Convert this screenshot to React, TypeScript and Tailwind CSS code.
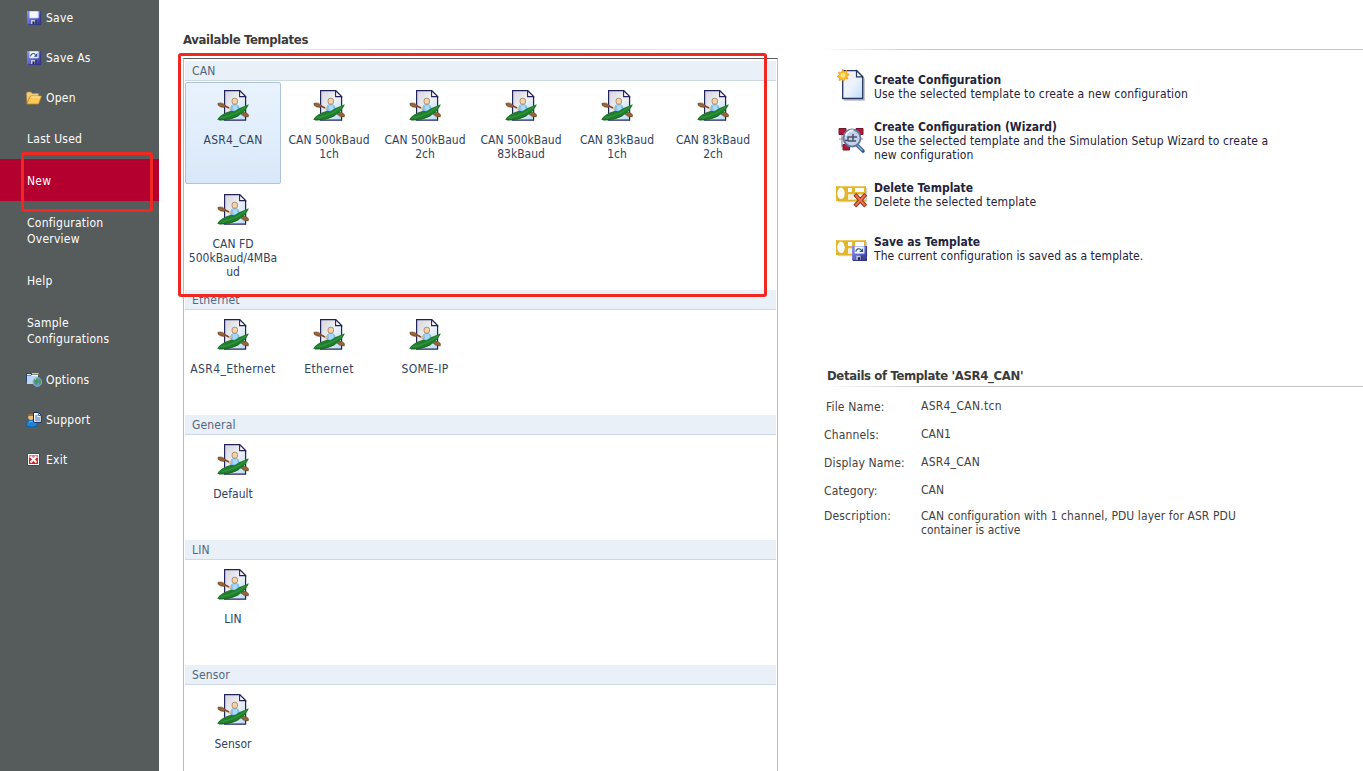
import type { ReactNode } from "react";

function DiskIcon({ arrow = false, className = "" }: { arrow?: boolean; className?: string }) {
  return (
    <svg viewBox="0 0 16 16" className={"block shrink-0 " + className}>
      <defs>
        <linearGradient id="disk" x1="0" y1="0" x2="1" y2="1">
          <stop offset="0" stopColor="#8b93ee" />
          <stop offset="0.5" stopColor="#5f66cf" />
          <stop offset="1" stopColor="#2c2d88" />
        </linearGradient>
      </defs>
      <path d="M1 1h14v14H2L1 14z" fill="url(#disk)" />
      <path d="M14.600 1v13.600H2" fill="none" stroke="#34367f" strokeWidth="0.800" />
      <path d="M3.500 1.300h9V8h-9z" fill="#f4f7ff" />
      <path d="M12.200 2v6H4" fill="none" stroke="#b9c7f3" strokeWidth="0.700" />
      <path d="M5 10h6v4.500H5z" fill="#363a85" />
      <path d="M5 10h4v4H5z" fill="#c5cbda" />
      <path d="M6.500 11.500h2V14h-2z" fill="#17194c" />
      {arrow && (
        <>
          <path d="M4.500 6.300C5 3.500 7.500 2.700 9.500 4.500" fill="none" stroke="#2c5580" strokeWidth="1.100" />
          <path d="M11.300 3v3.700H7.700z" fill="#2c5580" />
        </>
      )}
    </svg>
  );
}

function FolderIcon() {
  return (
    <svg viewBox="0 0 16 16" className="block h-4 w-4 shrink-0">
      <path d="M9.500 2.500c1.300-2 3.800-1.700 4.800 0m1-1.500V3.500h-2.500" fill="none" stroke="#3c638c" strokeWidth="1.100" />
      <path d="M.5 3 1.500 2H5l1 1.500h6.500V7H4L1 13z" fill="#f0cf7c" stroke="#b98c3a" strokeWidth="0.700" />
      <path d="M4.300 6h11.200l-3 8H.8z" fill="#fbc95a" stroke="#c58920" strokeWidth="0.800" />
      <path d="M5 7h9.500" stroke="#fff0b0" />
    </svg>
  );
}

function OptionsIcon() {
  return (
    <svg viewBox="0 0 16 16" className="block h-4 w-4 shrink-0">
      <path d="M6 1h6.500v3H6z" fill="#edc36c" />
      <path d="M0 1h5l1 1.500h6.500V10H0z" fill="#22457f" />
      <path d="M1 3.500h11V12H1z" fill="#b9d6f6" />
      <path d="M1 2.500h3.500l1 1H12" fill="none" stroke="#f0f7ff" />
      <circle cx="11.300" cy="10" r="4.400" fill="#5c9ac0" stroke="#9fb6c4" strokeWidth="0.800" />
      <path d="M8.300 8c2-3 4-1.500 3 .3 1.500 0 1.400 2.200-.2 2.800-.8 2.900-2.800-.1-2.800-3.100m5-1 2 2-1 3-1.500-1z" fill="#49964d" />
      <path d="M8.800 7.500 10.300 6.500" stroke="#d3edf2" />
    </svg>
  );
}

function SupportIcon() {
  return (
    <svg viewBox="0 0 16 16" className="block h-4 w-4 shrink-0">
      <path d="M.5 14v-2.500C1 9 3 8 6 8s5 1.300 5 3.500V14q-5 2-10.500 0" fill="#1b84d9" stroke="#0758a0" strokeWidth="0.700" />
      <path d="M3 10c2-1 5-.8 6.500 1" fill="none" stroke="#79bdf2" />
      <circle cx="5" cy="5" r="2.900" fill="#f0bd78" />
      <path d="M2.100 4.500C2 1 7.500 1 7.900 4.500 6 4.300 4.500 3 2.100 4.500" fill="#9a611e" />
      <path d="M7.500.5h5l2.800 2.800v7H7.500z" fill="#f5fbff" stroke="#172a61" />
      <path d="M12.300.5v3h3M9 4h2.500M9 6h5M9 8h5" fill="none" stroke="#3d6ca6" />
    </svg>
  );
}

function ExitIcon() {
  return (
    <svg viewBox="0 0 16 16" className="block h-4 w-4 shrink-0">
      <path d="M1.500 1.500h12v12h-12z" fill="#fff" stroke="#7b3438" />
      <path d="M3 3h9v9H3z" fill="#c8272c" />
      <path d="M3 3h9v3H3z" fill="#d98586" />
      <path d="m4.500 4.500 6 6m0-6-6 6" stroke="#fff" strokeWidth="1.900" />
    </svg>
  );
}

function KayakIcon() {
  return (
    <svg viewBox="0 0 32 32" className="block h-8 w-8">
      <defs>
        <linearGradient id="page" x1="0" y1="0" x2="1" y2="1">
          <stop offset="0" stopColor="#d4d5da" />
          <stop offset="0.500" stopColor="#f0f1f6" />
          <stop offset="1" stopColor="#b4dafa" />
        </linearGradient>
      </defs>
      <path d="M7.600.6h15l6 6v23.500h-21z" fill="url(#page)" stroke="#23235a" strokeWidth="1.200" />
      <path d="M22.600.6v6h6z" fill="#fff" stroke="#23235a" strokeWidth="1.100" />
      <path d="M7 15.500 14 19M22 21l4 2.500" stroke="#7a4c2a" strokeWidth="1.600" />
      <path d="M14 15.600q4-2.800 7.500-.3l2.500 6-11 2z" fill="#7fbbee" />
      <path d="M15.700 14.600q2 1.700 4.300 0l.8 5.700h-5z" fill="#aad8fb" />
      <rect x="15.100" y="8.300" width="5.400" height="5.900" rx="2.100" fill="#f3d3a8" stroke="#a07850" strokeWidth="0.800" />
      <path d="M.9 13.300q5-1.200 7.300 2.200l-.8 1.900q-4 .2-6.300-2.200zM24.300 22q5-.5 7.200 2.700l-.2 2.100q-4.500.9-7.200-2.700z" fill="#96643a" stroke="#69411f" strokeWidth="0.600" />
      <path d="M.2 29.800C2.500 25.500 8 22.300 14 20.700l3.500.5 4.500-3 9.800-4C30 20 23.500 26.300 15.500 28.600 10 30.200 4.500 30.900.2 29.800z" fill="#1f7d2b" />
      <path d="M4 28C11 26.500 21 23.500 28.500 17" fill="none" stroke="#2f973b" strokeWidth="1.500" />
      <path d="M2 30c6 .3 14-1 19.500-4.300" fill="none" stroke="#155a20" strokeWidth="0.700" />
      <path d="m12 17.700 2.200.9" stroke="#eec08e" strokeWidth="2" />
    </svg>
  );
}

function CreateIcon() {
  return (
    <svg viewBox="0 0 32 32" className="block h-8 w-8">
      <defs>
        <linearGradient id="sheet" x1="0" y1="0" x2="1" y2="1">
          <stop offset="0" stopColor="#f0f1f4" />
          <stop offset="0.500" stopColor="#eef3fa" />
          <stop offset="1" stopColor="#b9dffb" />
        </linearGradient>
      </defs>
      <path d="M8 31h20V9" fill="none" stroke="#b9bcc6" strokeWidth="1.600" />
      <path d="M6.700 1.700h14l6 6v21.800h-20z" fill="url(#sheet)" stroke="#26365d" strokeWidth="1.300" />
      <path d="M20.500 1.700v6.200h6.200z" fill="#fff" stroke="#26365d" strokeWidth="1.200" />
      <path d="m6.900.3 1.200 2.600 2.700-1.400-.2 3 2.700.9-2.500 2 1 2.500-3.100-.2-.8 2.600-2.100-1.900-2.700 1.200.7-2.900-2.800-1 2.500-2.100-1-2.400 3.100.2z" fill="#ffbf2c" stroke="#e39a2e" strokeWidth="0.800" />
      <circle cx="6.800" cy="6.200" r="2.300" fill="#ffe67a" />
    </svg>
  );
}

function WizardIcon() {
  return (
    <svg viewBox="0 0 32 32" className="block h-8 w-8">
      <path d="M3 14h24M6 8v14M24 8v8" stroke="#8a909b" strokeWidth="1.200" />
      <path d="M3 3.500h7v6H3zM20 3.500h7v6h-7zM7 19.500h6.500V25H7z" fill="#b31837" stroke="#741530" />
      <path d="m21.500 20.500 5.500 5.500" stroke="#3b5488" strokeWidth="3.600" strokeLinecap="round" />
      <path d="m21.500 20.500 5 5" stroke="#8fb0dc" strokeWidth="1.400" />
      <circle cx="16" cy="13" r="8.500" fill="#c3d0ea" stroke="#66789f" strokeWidth="1.800" />
      <path d="M9.500 10.500q3-5.500 8-5" fill="none" stroke="#f0f5ff" strokeWidth="1.800" />
      <path d="M9 15.500h3V12h9m-4-3v7m-5 0h8" fill="none" stroke="#4b5265" strokeWidth="1.500" />
    </svg>
  );
}

function TemplateIcon({ remove = false }: { remove?: boolean }) {
  return (
    <div className="relative h-[25px] w-8">
      <svg viewBox="0 0 32 25" className="block h-[25px] w-8">
        <path d="M2 16.500h28.500V3" fill="none" stroke="#cfcfcf" strokeWidth="1.500" />
        <path fillRule="evenodd" d="M0 1h30v15H0zm5 1.500c-5 1-5 11 0 11.500s5-10.500 0-11.500M12 3v4h4V3zm7 0v4h9V3zm-7 6.500v5h18v-5z" fill="#dfb62c" />
        <path d="M12 9.500h5v5h-5z" fill="#f5eedb" />
        <path d="M1 1.500h28" stroke="#ecc95c" />
        {remove && (
          <>
            <path d="m18.800 9.300 10.900 11.900m0-11.900L18.800 21.200" stroke="#8c3320" strokeWidth="4" />
            <path d="m19.400 10 9.700 10.500m0-10.500-9.700 10.500" stroke="#f0704a" strokeWidth="2" />
          </>
        )}
      </svg>
      {!remove && <DiskIcon arrow className="absolute top-[6px] left-[15px] h-[17px] w-[17px]" />}
    </div>
  );
}

function NavItem({ icon, className, children }: { icon?: ReactNode; className: string; children: ReactNode }) {
  return (
    <div className={"flex items-center tracking-[0.25px] text-white " + className}>
      {icon ? <span className="mr-1 ml-[26px]">{icon}</span> : <span className="w-[27px]" />}
      <span className="leading-4">{children}</span>
    </div>
  );
}

const sections = [
  {
    name: "CAN",
    tiles: [["ASR4_CAN"], ["CAN 500kBaud", "1ch"], ["CAN 500kBaud", "2ch"], ["CAN 500kBaud", "83kBaud"], ["CAN 83kBaud", "1ch"], ["CAN 83kBaud", "2ch"], ["CAN FD", "500kBaud/4MBa", "ud"]],
  },
  { name: "Ethernet", tiles: [["ASR4_Ethernet"], ["Ethernet"], ["SOME-IP"]] },
  { name: "General", tiles: [["Default"]] },
  { name: "LIN", tiles: [["LIN"]] },
  { name: "Sensor", tiles: [["Sensor"]] },
];

const labelTracking: Record<string, string> = {
  ASR4_CAN: "tracking-[0.25px]",
  ASR4_Ethernet: "tracking-[0.37px]",
  Ethernet: "tracking-[0.4px]",
  "SOME-IP": "tracking-[0.25px]",
};

function Action({ icon, title, lines, className, iconClass, textClass = "tracking-[0.13px]" }: { icon: ReactNode; title: string; lines: string[]; className: string; iconClass: string; textClass?: string }) {
  return (
    <div className={"flex items-start pl-[17px] text-[#23233a] " + className}>
      <div className={"w-[38px] shrink-0 " + iconClass}>{icon}</div>
      <div className="whitespace-nowrap leading-[14px]">
        <div className="font-bold">{title}</div>
        {lines.map((l) => <div key={l} className={textClass}>{l}</div>)}
      </div>
    </div>
  );
}

function Detail({ label, className, labelClass = "pt-px", valueClass = "", children }: { label: string; className: string; labelClass?: string; valueClass?: string; children: ReactNode }) {
  return (
    <div className={"flex leading-[14px] " + className}>
      <div className={"w-[97px] shrink-0 tracking-[0.17px] " + labelClass}>{label}</div>
      <div className={"whitespace-nowrap " + valueClass}>{children}</div>
    </div>
  );
}

export default function App() {
  return (
    <div className="relative flex h-[771px] w-[1363px] overflow-hidden bg-white font-['DejaVu_Sans_Condensed','DejaVu_Sans',sans-serif] text-[12px] [font-stretch:condensed]">
      <nav className="w-[159px] shrink-0 bg-[#565b5c]">
        <NavItem className="-mt-[2px] h-10" icon={<DiskIcon className="-mt-px h-4 w-4" />}>Save</NavItem>
        <NavItem className="h-10" icon={<DiskIcon arrow className="-mt-px h-4 w-4" />}>Save As</NavItem>
        <NavItem className="h-10" icon={<FolderIcon />}>Open</NavItem>
        <NavItem className="h-[41px] pt-px">Last Used</NavItem>
        <NavItem className="h-[42px] bg-[#b4002f] pt-0.5">New</NavItem>
        <NavItem className="h-[60px]">Configuration<br />Overview</NavItem>
        <NavItem className="h-10">Help</NavItem>
        <NavItem className="h-[60px]">Sample<br />Configurations</NavItem>
        <NavItem className="h-[38px]" icon={<OptionsIcon />}>Options</NavItem>
        <NavItem className="h-[42px]" icon={<SupportIcon />}>Support</NavItem>
        <NavItem className="h-[38px]" icon={<ExitIcon />}>Exit</NavItem>
      </nav>

      <main className="ml-6 w-[595px] shrink-0">
        <h1 className="mt-8 h-[17px] text-[13px] leading-[15px] font-bold tracking-[-0.34px] text-[#3b3b3b]">Available Templates</h1>
        <div className="h-px bg-linear-to-r from-transparent via-[#c4c4c8] to-transparent" />
        <div className="mt-2 h-[713px] overflow-hidden border-x border-t border-x-[#b9bbc0] border-t-[#59595f] pt-[2px]">
          {sections.map((s, si) => (
            <section key={s.name}>
              <h2 className="mx-px h-5 border-b border-[#ccd9e5] bg-[#e9f0f7] pl-[7px] leading-5 tracking-[0.15px] text-[#526680]">{s.name}</h2>
              <div className="flex flex-wrap pt-px pl-px">
                {s.tiles.map((t, i) => (
                  <div
                    key={i}
                    className={
                      "mb-0.5 flex h-[102px] w-24 flex-col items-center rounded-[2px] border pt-[7px] text-[#2f435f] " +
                      (si === 0 && i === 0 ? "border-[#adc4d8] bg-linear-to-b from-[#e9f3fd] to-[#d9e8f9]" : "border-transparent")
                    }
                  >
                    <KayakIcon />
                    <div className="mt-[11px] text-center leading-[14px] whitespace-nowrap">
                      {t.map((l) => <div key={l} className={labelTracking[l] ?? ""}>{l}</div>)}
                    </div>
                  </div>
                ))}
              </div>
            </section>
          ))}
        </div>
      </main>

      <aside className="ml-[41px] w-[544px] shrink-0 pt-[49px]">
        <div className="h-px bg-linear-to-r from-transparent via-[#c4c4c8] via-20% to-[#c4c4c8]" />
        <Action className="mt-[23px] h-[46px]" iconClass="-mt-1" textClass="tracking-[0.16px]" icon={<CreateIcon />} title="Create Configuration" lines={["Use the selected template to create a new configuration"]} />
        <Action className="h-[61px] pt-px" iconClass="pt-[5px]" icon={<WizardIcon />} title="Create Configuration (Wizard)" lines={["Use the selected template and the Simulation Setup Wizard to create a", "new configuration"]} />
        <Action className="h-[54px] pt-px" iconClass="pt-1" textClass="tracking-[0.16px]" icon={<TemplateIcon remove />} title="Delete Template" lines={["Delete the selected template"]} />
        <Action className="h-[134px] pt-px" iconClass="pt-1" textClass="tracking-[0.06px]" icon={<TemplateIcon />} title="Save as Template" lines={["The current configuration is saved as a template."]} />

        <section className="pl-[5px] text-[#424242]">
          <h2 className="h-[18px] pl-[3px] text-[13px] leading-4 font-bold tracking-[-0.35px] text-[#3b3b3b]">Details of Template 'ASR4_CAN'</h2>
          <div className="h-px bg-linear-to-r from-transparent via-[#c4c4c8] via-20% to-[#c4c4c8]" />
          <Detail className="mt-3 h-7" labelClass="pt-px pl-0.5 tracking-[0.3px]" valueClass="tracking-[0.28px]" label="File Name:">ASR4_CAN.tcn</Detail>
          <Detail className="h-7" label="Channels:">CAN1</Detail>
          <Detail className="h-7" valueClass="tracking-[0.25px]" label="Display Name:">ASR4_CAN</Detail>
          <Detail className="h-[26px]" label="Category:">CAN</Detail>
          <Detail className="" labelClass="" valueClass="tracking-[0.08px]" label="Description:">CAN configuration with 1 channel, PDU layer for ASR PDU<br /><span className="tracking-normal">container is active</span></Detail>
        </section>
      </aside>

      <div className="absolute top-[152px] left-[21px] h-[60px] w-[132px] rounded-[3px] border-[3px] border-[#f02822]" />
      <div className="absolute top-[53px] left-[178px] h-[244px] w-[589px] rounded-[3px] border-[3px] border-[#f02822]" />
    </div>
  );
}
